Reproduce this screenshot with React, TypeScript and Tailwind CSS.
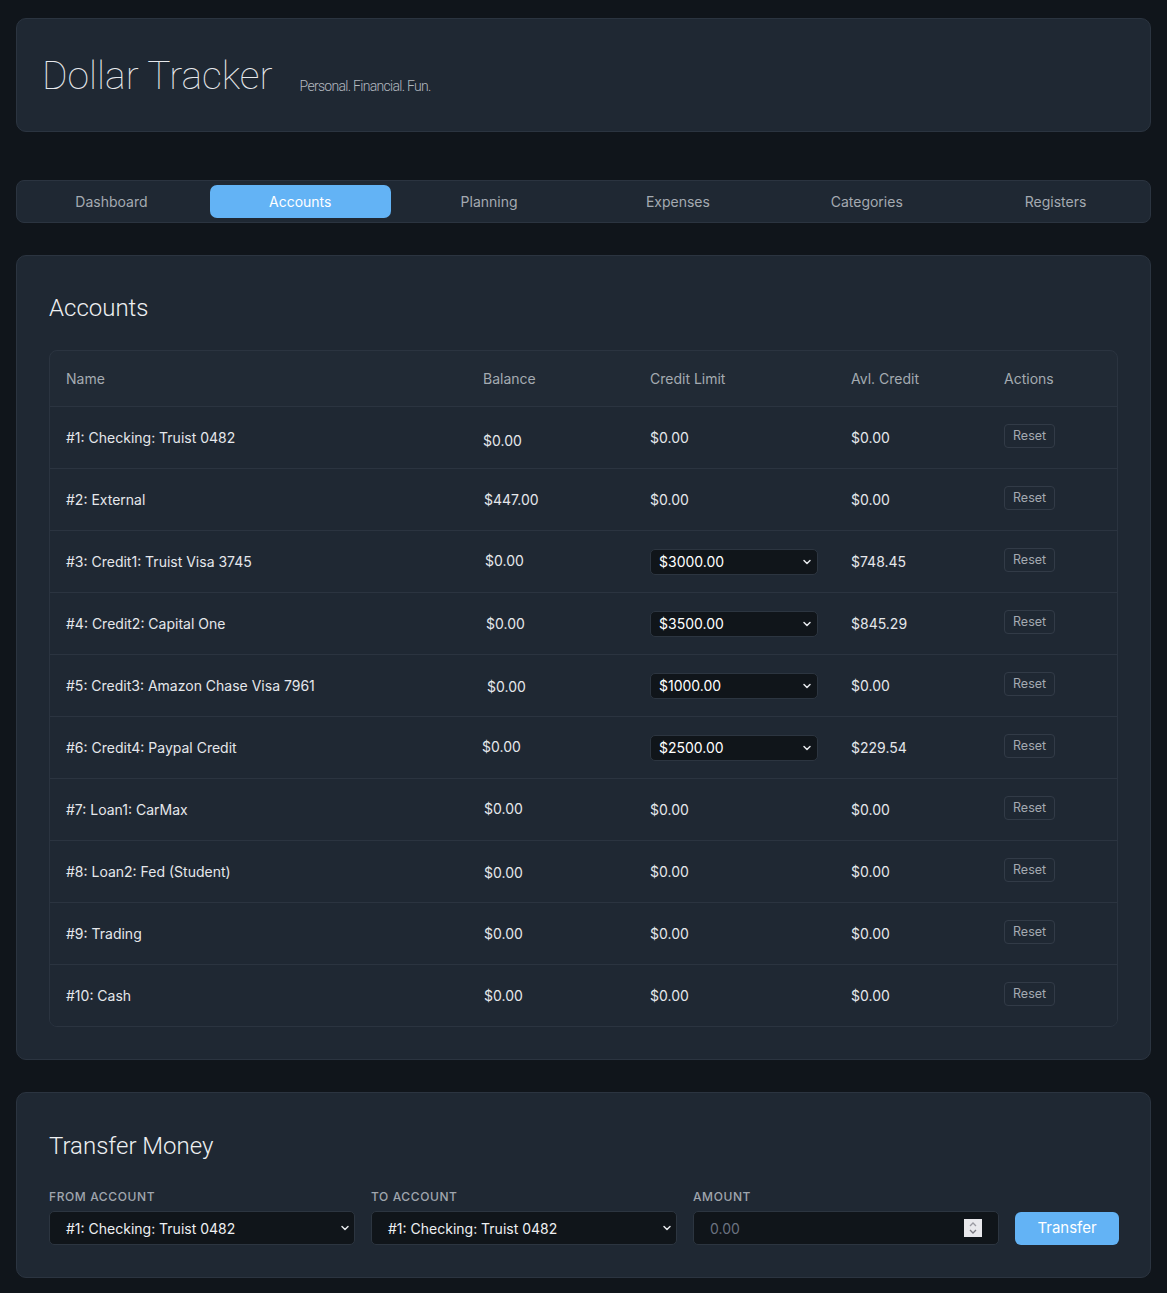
import React from "react";

type Account = {
  name: string;
  balance: string;
  limit: string | null;
  avl: string;
  shift: string;
};

const accounts: Account[] = [
  { name: "#1: Checking: Truist 0482", balance: "$0.00", limit: null, avl: "$0.00", shift: "ml-0 mt-[5px]" },
  { name: "#2: External", balance: "$447.00", limit: null, avl: "$0.00", shift: "ml-px mt-0" },
  { name: "#3: Credit1: Truist Visa 3745", balance: "$0.00", limit: "$3000.00", avl: "$748.45", shift: "ml-[2px] -mt-[2px]" },
  { name: "#4: Credit2: Capital One", balance: "$0.00", limit: "$3500.00", avl: "$845.29", shift: "ml-[3px] mt-0" },
  { name: "#5: Credit3: Amazon Chase Visa 7961", balance: "$0.00", limit: "$1000.00", avl: "$0.00", shift: "ml-[4px] mt-[2px]" },
  { name: "#6: Credit4: Paypal Credit", balance: "$0.00", limit: "$2500.00", avl: "$229.54", shift: "-ml-px -mt-[2px]" },
  { name: "#7: Loan1: CarMax", balance: "$0.00", limit: null, avl: "$0.00", shift: "ml-px -mt-[2px]" },
  { name: "#8: Loan2: Fed (Student)", balance: "$0.00", limit: null, avl: "$0.00", shift: "ml-px mt-[2px]" },
  { name: "#9: Trading", balance: "$0.00", limit: null, avl: "$0.00", shift: "ml-px mt-0" },
  { name: "#10: Cash", balance: "$0.00", limit: null, avl: "$0.00", shift: "ml-px mt-0" },
];

const tabs = ["Dashboard", "Accounts", "Planning", "Expenses", "Categories", "Registers"];

const cols = "grid grid-cols-[417px_167px_201px_153px_1fr] items-center";

function Chevron() {
  return (
    <svg width="10" height="10" viewBox="0 0 10 10" className="shrink-0">
      <path d="M2 3.5 L5 6.5 L8 3.5" fill="none" stroke="#e5e7eb" strokeWidth="1.5" strokeLinecap="round" strokeLinejoin="round" />
    </svg>
  );
}

function LimitSelect({ value }: { value: string }) {
  return (
    <div className="w-[168px] h-[26px] flex items-center justify-between pl-[8px] pr-[5px] rounded-[5px] border border-[#2c3540] bg-[#10151a] text-[14px] text-white">
      <span>{value}</span>
      <Chevron />
    </div>
  );
}

function Field({ label, children }: { label: string; children: React.ReactNode }) {
  return (
    <div className="flex flex-col gap-[5px]">
      <span className="text-[12px] font-medium tracking-[0.05em] uppercase text-[#a0a6ae]">{label}</span>
      {children}
    </div>
  );
}

function AccountSelect() {
  return (
    <div className="h-[34px] flex items-center justify-between pl-[16px] pr-[4px] rounded-[5px] border border-[#2c3540] bg-[#10151a] text-[14px] text-[#eef0f2]">
      <span>#1: Checking: Truist 0482</span>
      <Chevron />
    </div>
  );
}

export default function App() {
  return (
    <div className="min-h-[1293px] bg-[#10151b] px-4 pt-[18px] pb-4 font-['Inter',sans-serif] text-[#e5e7eb]">
      <header className="h-[114px] rounded-[10px] border border-[#2b3440] bg-[#1f2833] flex items-center pl-[25px] pt-[2px]">
        <h1 className="font-['Roboto',sans-serif] font-thin text-[39px] text-[#e8eaed] leading-none">Dollar Tracker</h1>
        <span className="ml-[27px] mt-[20px] font-['Roboto',sans-serif] font-light text-[14px] tracking-[-0.05em] text-[#b4b9c0]">
          Personal. Financial. Fun.
        </span>
      </header>

      <nav className="mt-[48px] h-[43px] rounded-[8px] border border-[#2b3440] bg-[#1f2833] grid grid-cols-6 gap-2 px-[4px] py-[4px]">
        {tabs.map((t) => (
          <div
            key={t}
            className={
              t === "Accounts"
                ? "rounded-[7px] bg-[#63b3f5] text-white flex items-center justify-center text-[14px]"
                : "rounded-[7px] text-[#a4aab1] flex items-center justify-center text-[14px]"
            }
          >
            {t}
          </div>
        ))}
      </nav>

      <section className="mt-[32px] rounded-[10px] border border-[#2b3440] bg-[#1f2833] px-[32px] pt-[40px] pb-[32px]">
        <h2 className="font-['Roboto',sans-serif] font-light text-[24px] text-[#eef0f2] leading-none">Accounts</h2>
        <div className="mt-[30px] rounded-[8px] border border-[#2b3440] bg-[#212a35] overflow-hidden">
          <div className={`${cols} h-[56px] text-[14px] text-[#a4aab1] border-b border-[#2b3440]`}>
            <span className="pl-4">Name</span>
            <span className="pl-4">Balance</span>
            <span className="pl-4">Credit Limit</span>
            <span className="pl-4">Avl. Credit</span>
            <span className="pl-4">Actions</span>
          </div>
          {accounts.map((a, i) => (
            <div
              key={a.name}
              className={`${cols} ${i < accounts.length - 1 ? "h-[62px] border-b border-[#2b3440]" : "h-[61px]"} text-[14px] text-[#e5e7eb] bg-[#1f2833]`}
            >
              <span className="pl-4">{a.name}</span>
              <span className={`pl-4 ${a.shift}`}>{a.balance}</span>
              <span className="pl-4">{a.limit ? <LimitSelect value={a.limit} /> : "$0.00"}</span>
              <span className="pl-4">{a.avl}</span>
              <span className="pl-4 -mt-[3px]">
                <button className="h-[24px] px-[8px] rounded-[4px] border border-[#323b47] text-[12.5px] text-[#a4aab1]">Reset</button>
              </span>
            </div>
          ))}
        </div>
      </section>

      <section className="mt-[32px] rounded-[10px] border border-[#2b3440] bg-[#1f2833] px-[32px] pt-[41px] pb-[32px]">
        <h2 className="font-['Roboto',sans-serif] font-light text-[24px] text-[#eef0f2] leading-none">Transfer Money</h2>
        <div className="mt-[30px] grid grid-cols-[306px_306px_306px_1fr] gap-x-4 items-end">
          <Field label="From Account">
            <AccountSelect />
          </Field>
          <Field label="To Account">
            <AccountSelect />
          </Field>
          <Field label="Amount">
            <div className="h-[34px] flex items-center justify-between pl-[16px] pr-[16px] rounded-[5px] border border-[#2c3540] bg-[#10151a] text-[14px]">
              <span className="text-[#6b7280]">0.00</span>
              <span className="w-[18px] h-[18px] bg-[#e8e8ec] flex flex-col items-center justify-center">
                <svg width="10" height="14" viewBox="0 0 10 14">
                  <path d="M2 5 L5 2 L8 5" fill="none" stroke="#9a9aa2" strokeWidth="1.3" />
                  <path d="M2 9 L5 12 L8 9" fill="none" stroke="#7a7a82" strokeWidth="1.3" />
                </svg>
              </span>
            </div>
          </Field>
          <button className="h-[33px] w-[104px] rounded-[6px] bg-[#63b3f5] text-white text-[15px]">Transfer</button>
        </div>
      </section>
    </div>
  );
}
